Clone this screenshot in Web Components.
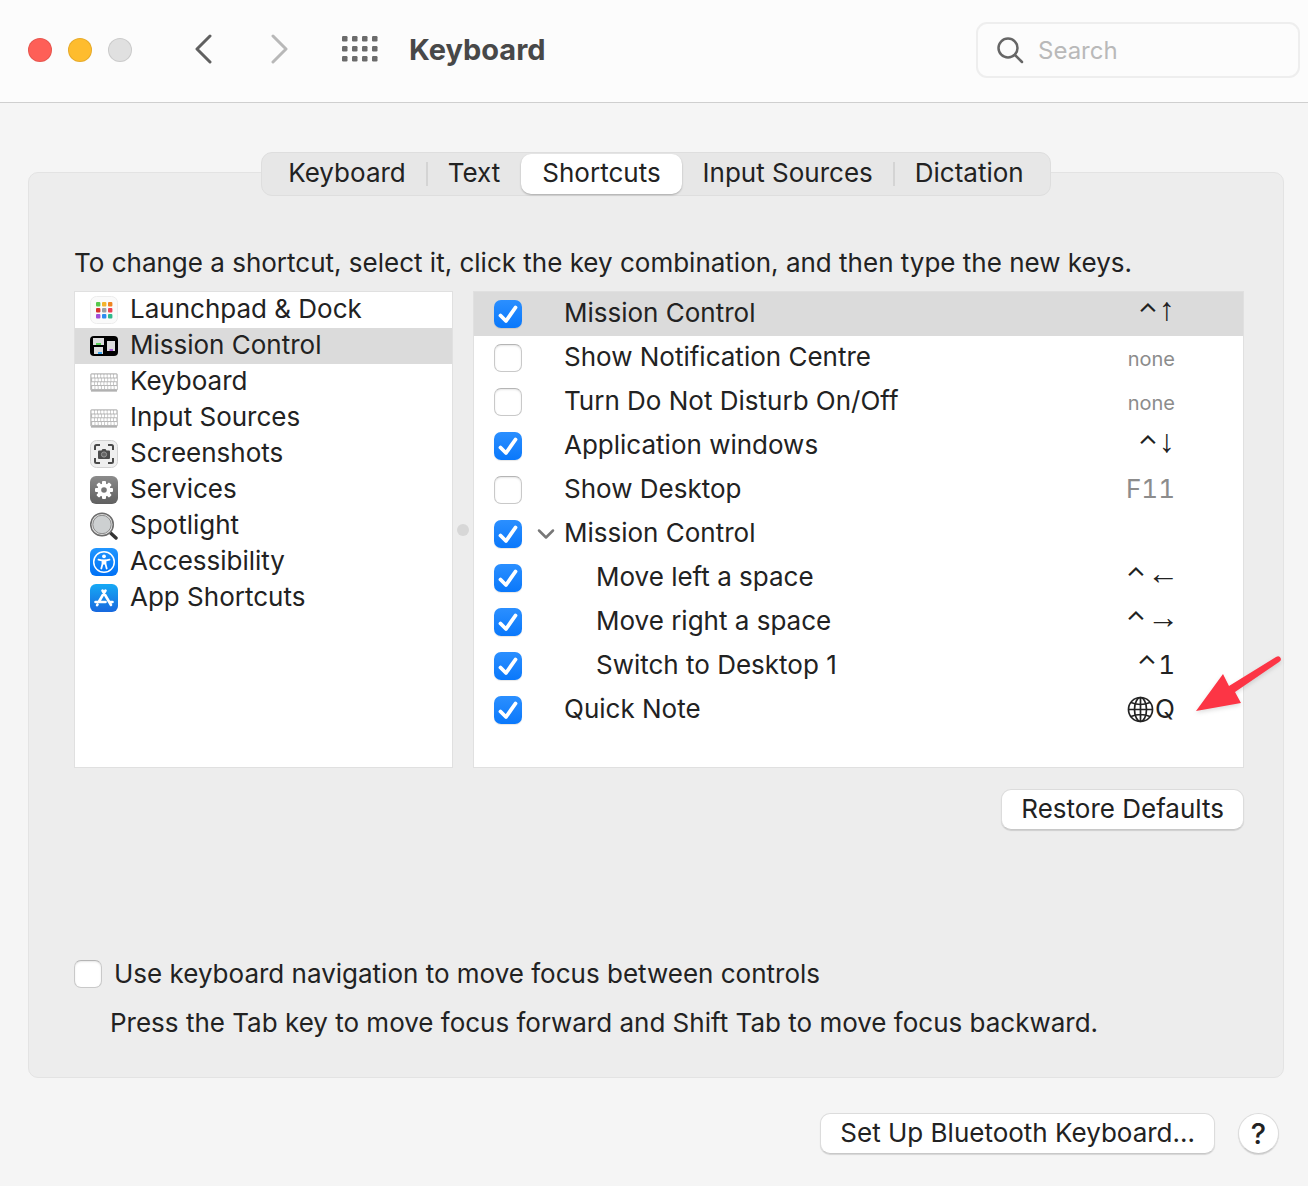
<!DOCTYPE html>
<html lang="en">
<head>
<meta charset="utf-8">
<title>Keyboard</title>
<style>
  html { height: 100%; }
  body { margin: 0; min-height: 100%; background: #f5f5f5; color: #222; font: 26px/36px Inter, "Liberation Sans", sans-serif; }
</style>
</head>
<body>
<pref-window>
  <title-bar slot="bar" heading="Keyboard"></title-bar>
  <tab-strip slot="tabs">
    <tab-item>Keyboard</tab-item>
    <tab-item divided>Text</tab-item>
    <tab-item selected>Shortcuts</tab-item>
    <tab-item>Input Sources</tab-item>
    <tab-item divided>Dictation</tab-item>
  </tab-strip>
  <span slot="intro">To change a shortcut, select it, click the key combination, and then type the new keys.</span>
  <category-list slot="categories">
    <category-item icon="launchpad">Launchpad &amp; Dock</category-item>
    <category-item icon="mission" selected>Mission Control</category-item>
    <category-item icon="keyboard">Keyboard</category-item>
    <category-item icon="keyboard">Input Sources</category-item>
    <category-item icon="screenshot">Screenshots</category-item>
    <category-item icon="gear">Services</category-item>
    <category-item icon="spotlight">Spotlight</category-item>
    <category-item icon="access">Accessibility</category-item>
    <category-item icon="apps">App Shortcuts</category-item>
  </category-list>
  <shortcut-list slot="shortcuts">
    <shortcut-row checked selected control keys="↑">Mission Control</shortcut-row>
    <shortcut-row keys="none" tone="small">Show Notification Centre</shortcut-row>
    <shortcut-row keys="none" tone="small">Turn Do Not Disturb On/Off</shortcut-row>
    <shortcut-row checked control keys="↓">Application windows</shortcut-row>
    <shortcut-row keys="F11" tone="dim">Show Desktop</shortcut-row>
    <shortcut-row checked group>Mission Control</shortcut-row>
    <shortcut-row checked nested control keys="←">Move left a space</shortcut-row>
    <shortcut-row checked nested control keys="→">Move right a space</shortcut-row>
    <shortcut-row checked nested control keys="1">Switch to Desktop 1</shortcut-row>
    <shortcut-row checked globe pointer keys="Q">Quick Note</shortcut-row>
  </shortcut-list>
  <push-button slot="restore">Restore Defaults</push-button>
  <check-option slot="option">Use keyboard navigation to move focus between controls</check-option>
  <span slot="hint">Press the Tab key to move focus forward and Shift Tab to move focus backward.</span>
  <push-button slot="footer">Set Up Bluetooth Keyboard…</push-button>
  <push-button slot="footer" round>?</push-button>
</pref-window>

<script>
const define = (name, render) => customElements.define(name, class extends HTMLElement {
  constructor() {
    super();
    this.attachShadow({ mode: 'open' });
  }
  connectedCallback() {
    this.shadowRoot.innerHTML = render(this);
  }
});

const checkStyle = `
  input { appearance: none; box-sizing: border-box; flex: none; width: 28px; height: 28px; margin: 0; border: 1px solid #c9c9c9; border-top-color: #b5b5b5; border-radius: 7px; background: #fff; box-shadow: inset 0 1px 2px #0000001a; }
  input:checked { border: 0; box-shadow: 0 1px 1px #0000001a; background: url("data:image/svg+xml,%3Csvg xmlns='http://www.w3.org/2000/svg' viewBox='0 0 28 28'%3E%3Cpath d='M6.500 15.500L12 21L21.500 7.500' fill='none' stroke='white' stroke-width='3.800' stroke-linecap='round' stroke-linejoin='round'/%3E%3C/svg%3E"), linear-gradient(#2b8fff, #0a78fb); }`;

const keyRows = [0, 1, 2, 3].map(r => Array.from({ length: 8 }, (_, c) =>
  `<rect x="${1.5 + c * 3.2 + (r % 2) * .6}" y="${6.6 + r * 3.8}" width="2.500" height="2.900" rx=".4"/>`).join('')).join('');
const padColors = ['#56c84b', '#f3b32a', '#ef8420', '#d9322d', '#9b9ea3', '#ef3f55', '#a04bd8', '#2d8cf0', '#2fb98c'];
const teeth = Array.from({ length: 8 }, (_, i) => `<rect x="12" y="5" width="4" height="6" rx="1" transform="rotate(${i * 45} 14 14)"/>`).join('');

const icons = {
  launchpad: `<rect x=".5" y=".5" width="27" height="27" rx="6" fill="#fafafa" stroke="#ececec"/>` +
    padColors.map((c, i) => `<rect x="${6 + (i % 3) * 6}" y="${6 + Math.floor(i / 3) * 6}" width="4.400" height="4.400" rx="1" fill="${c}"/>`).join(''),
  mission: `<rect y="4" width="28" height="20" rx="4"/><g fill="#dcdcdc"><rect x="3" y="6" width="11" height="7"/><rect x="4" y="15" width="9" height="7"/><rect x="17" y="9" width="8" height="10"/></g><path d="M6 12h5" stroke="#5ccf58" stroke-width="2"/><path d="M8 21h4" stroke="#38a5ee" stroke-width="2"/><path d="M19.500 18h3.500" stroke="#a65bd6" stroke-width="2"/>`,
  keyboard: `<rect x=".5" y="5.500" width="27" height="17" rx="1.500" fill="#b9b9b9" stroke="#c9c9c9"/><g fill="#fff">${keyRows}</g><path d="M1 23h26" stroke="#999"/>`,
  screenshot: `<rect x=".5" y=".5" width="27" height="27" rx="6" fill="#efefef" stroke="#d2d2d2"/><path d="M5 10V6.500Q5 5 6.500 5H10M18 5h3.500Q23 5 23 6.500V10M23 18v3.500Q23 23 21.500 23H18M10 23H6.500Q5 23 5 21.500V18" fill="none" stroke="#4a4a4a" stroke-width="2"/><path d="M9 10.500h2.500l1-1.500h3l1 1.500H19q1 0 1 1V18q0 1-1 1H9q-1 0-1-1v-6.500q0-1 1-1z" fill="#4c4c4c"/><circle cx="14" cy="14.500" r="2.600" fill="#666" stroke="#999"/>`,
  gear: `<defs><linearGradient id="g" x2="0" y2="1"><stop stop-color="#8b8b8b"/><stop offset="1" stop-color="#606060"/></linearGradient></defs><rect width="28" height="28" rx="6" fill="url(#g)"/><g fill="#fff">${teeth}<circle cx="14" cy="14" r="6.600"/></g><circle cx="14" cy="14" r="2.800" fill="#777"/>`,
  spotlight: `<path d="M19.500 20L26 26" stroke="#333" stroke-width="3.400" stroke-linecap="round"/><circle cx="12" cy="12.500" r="10.500" fill="#cdd0d1" stroke="#e4e4e4" stroke-width="2.400"/><circle cx="12" cy="12.500" r="11.300" fill="none" stroke="#6c6c6c" stroke-width="1.500"/><circle cx="12" cy="12.500" r="9.200" fill="none" stroke="#8b8b8b"/>`,
  access: `<defs><linearGradient id="g" x2="0" y2="1"><stop stop-color="#2196ff"/><stop offset="1" stop-color="#0071f5"/></linearGradient></defs><rect width="28" height="28" rx="6" fill="url(#g)"/><circle cx="14" cy="14" r="10.300" fill="none" stroke="#fff" stroke-width="1.500"/><circle cx="14" cy="8.300" r="1.900" fill="#fff"/><path d="M8.500 11.700l4 .8v3.500L11.300 20.500M19.500 11.700l-4 .8v3.500l1.200 4.500" fill="none" stroke="#fff" stroke-width="1.800" stroke-linecap="round"/><path d="M12.300 11.500h3.400v5h-3.400z" fill="#fff"/>`,
  apps: `<defs><linearGradient id="g" x2="0" y2="1"><stop stop-color="#16a9f5"/><stop offset="1" stop-color="#1768de"/></linearGradient></defs><rect width="28" height="28" rx="6" fill="url(#g)"/><g fill="none" stroke="#fff" stroke-width="2.600" stroke-linecap="round"><path d="M15.500 6.500L9 17.500M12.500 6.500l8.500 14.500M5.500 18h10M20 18h2.500M7.500 20.500l-.4.600"/></g>`
};

define('pref-window', () => `
  <style>
    :host { display: flex; flex-direction: column; min-height: 100vh; }
    main { display: flex; flex-direction: column; padding: 49px 24px 0 28px; }
    ::slotted([slot=tabs]) { align-self: center; z-index: 1; }
    .panel { margin-top: -24px; padding: 72px 39px 36px 45px; border: 1px solid #e3e3e3; border-radius: 10px; background: #ededed; }
    p { margin: 0; }
    .lists { display: grid; grid-template-columns: 379fr 20px 771fr; align-items: stretch; margin-top: 10px; }
    .split { align-self: center; justify-self: center; width: 12px; height: 12px; border-radius: 50%; background: #d7d7d7; }
    .restore { display: flex; justify-content: flex-end; margin-top: 21px; }
    .option { margin-top: 126px; }
    .hint { margin: 13px 0 0 36px; }
    footer { display: flex; justify-content: flex-end; gap: 23px; padding: 35px 29px 31px; }
  </style>
  <slot name="bar"></slot>
  <main>
    <slot name="tabs"></slot>
    <section class="panel">
      <p><slot name="intro"></slot></p>
      <div class="lists"><slot name="categories"></slot><i class="split"></i><slot name="shortcuts"></slot></div>
      <div class="restore"><slot name="restore"></slot></div>
      <div class="option"><slot name="option"></slot></div>
      <p class="hint"><slot name="hint"></slot></p>
    </section>
  </main>
  <footer><slot name="footer"></slot></footer>`);

define('title-bar', el => `
  <style>
    :host { display: flex; align-items: center; box-sizing: border-box; height: 103px; padding: 0 8px 3px 28px; border-bottom: 1px solid #cfcfcf; background: #fcfcfc; }
    .lights { display: flex; gap: 16px; }
    .lights button { width: 24px; height: 24px; border-radius: 50%; box-shadow: inset 0 0 0 1px #00000018; }
    button { display: block; padding: 0; border: 0; background: none; }
    svg { display: block; }
    .nav { display: flex; gap: 56px; margin-left: 61px; padding-bottom: 2px; }
    .all { margin-left: 53px; }
    h1 { flex: 1; margin: 0 0 0 30px; color: #484848; font-size: 29px; line-height: 36px; font-weight: 700; }
    label { display: flex; align-items: center; gap: 14px; box-sizing: border-box; width: 324px; height: 56px; padding: 0 19px; border: 2px solid #eee; border-radius: 11px; }
    input { flex: 1; min-width: 0; padding: 2px 0 0; border: 0; outline: 0; background: none; font: inherit; font-size: 24px; }
    input::placeholder { color: #b9b9b9; opacity: 1; }
  </style>
  <div class="lights">
    <button aria-label="Close" style="background:#fe5f57"></button>
    <button aria-label="Minimise" style="background:#febc2e"></button>
    <button aria-label="Zoom" style="background:#e0e0e0"></button>
  </div>
  <div class="nav">
    <button aria-label="Back"><svg width="20" height="30" fill="none" stroke="#606060" stroke-width="3" stroke-linecap="round" stroke-linejoin="round"><path d="M17 2L4 15L17 28"/></svg></button>
    <button aria-label="Forward"><svg width="20" height="30" fill="none" stroke="#b8b8b8" stroke-width="3" stroke-linecap="round" stroke-linejoin="round"><path d="M4 2L17 15L4 28"/></svg></button>
  </div>
  <button class="all" aria-label="Show all"><svg width="37" height="27" fill="#6b6b6b">${[0, 1, 2].map(r => [0, 1, 2, 3].map(c => `<rect x="${c * 10}" y="${r * 10}" width="5.500" height="5.500" rx="1.200"/>`).join('')).join('')}</svg></button>
  <h1>${el.getAttribute('heading')}</h1>
  <label><svg width="27" height="28" fill="none" stroke="#666" stroke-width="2.500" stroke-linecap="round"><circle cx="11" cy="12" r="9.500"/><path d="M18 19L25 26"/></svg><input type="search" placeholder="Search" aria-label="Search"></label>`);

define('tab-strip', () => `
  <style>
    :host { display: flex; box-sizing: border-box; height: 44px; padding: 1px 5px; border: 1px solid #dedede; border-radius: 11px; background: #e7e7e7; }
  </style><slot></slot>`);

define('tab-item', el => `
  <style>
    :host { display: flex; align-items: center; }
    :host([divided])::before { content: ""; width: 2px; height: 24px; margin: 0 -1px; background: #d4d4d4; }
    button { height: 40px; padding: 0 21px 2px; border: 0; border-radius: 10px; background: none; color: inherit; font: inherit; }
    :host([selected]) button { background: #fff; box-shadow: 0 1px 2px #0004; }
  </style>
  <button role="tab" aria-selected="${el.hasAttribute('selected')}"><slot></slot></button>`);

define('category-list', () => `
  <style>:host { display: block; border: 1px solid #e0e0e0; background: #fff; }</style><slot></slot>`);

define('category-item', el => `
  <style>
    :host { display: flex; align-items: center; gap: 12px; height: 36px; padding: 0 15px; }
    :host([selected]) { background: #dbdbdb; }
    svg { flex: none; }
    span { line-height: 34px; padding-bottom: 2px; }
  </style>
  <svg width="28" height="28" viewBox="0 0 28 28">${icons[el.getAttribute('icon')]}</svg><span><slot></slot></span>`);

define('shortcut-list', () => `
  <style>:host { display: block; padding-bottom: 35px; border: 1px solid #e0e0e0; background: #fff; }</style><slot></slot>`);

define('shortcut-row', el => {
  const keys = el.getAttribute('keys') || '';
  const arrow = keys && '↑↓←→'.includes(keys);
  const wide = keys && '←→'.includes(keys);
  return `
  <style>
    :host { display: block; position: relative; }
    :host([selected]) { background: #dbdbdb; }
    label { display: grid; grid-template-columns: 28px 42px 1fr auto; align-items: center; height: 44px; padding: 0 68px 0 20px; }
    ${checkStyle}
    .fold { justify-self: end; margin-right: 9px; }
    .fold svg { display: block; }
    .name, .keys { line-height: 34px; padding-bottom: 2px; }
    :host([nested]) .name { padding-left: 32px; }
    .keys { display: flex; align-items: center; gap: 1px; font-variant-numeric: tabular-nums; }
    .arrow { padding-bottom: 8px; font-family: "Liberation Sans", sans-serif; font-size: 32px; line-height: 26px; font-weight: 700; }
    .wide { margin: 0 -4px 0 0; }
    :host([tone]) .keys { color: #8c8c8c; }
    :host([tone=small]) .keys { font-size: 20px; padding: 2px 0 0; }
    .pointer { position: absolute; top: -33px; right: -41px; filter: drop-shadow(0 2px 2px #0002); }
  </style>
  <label>
    <input type="checkbox" ${el.hasAttribute('checked') ? 'checked' : ''}>
    <i class="fold">${el.hasAttribute('group') ? '<svg width="18" height="12" fill="none" stroke="#777" stroke-width="2.500" stroke-linecap="round" stroke-linejoin="round"><path d="M2 2.500L9 9.500L16 2.500"/></svg>' : ''}</i>
    <span class="name"><slot></slot></span>
    <span class="keys">${el.hasAttribute('globe') ? '<svg width="27" height="27" fill="none" stroke="#222" stroke-width="1.700"><circle cx="13.500" cy="13.500" r="12"/><ellipse cx="13.500" cy="13.500" rx="6" ry="12"/><path d="M13.500 1.500v24M1.500 13.500h24M4 6.500q9.500 4 19 0M4 20.500q9.500-4 19 0"/></svg>' : ''}${el.hasAttribute('control') ? '<span>⌃</span>' : ''}<span class="${arrow ? 'arrow' : ''} ${wide ? 'wide' : ''}">${keys}</span></span>
  </label>
  ${el.hasAttribute('pointer') ? '<svg class="pointer" width="92" height="66"><path d="M4 56L31 19L37 31L84 2Q88 0 89 4Q89 6 87 7L43 37L49 48Z" fill="#fc3545"/></svg>' : ''}`;
});

define('push-button', () => `
  <style>
    :host { display: block; }
    button { display: block; height: 41px; padding: 0 19px 2px; border: 1px solid #dcdcdc; border-bottom-color: #c8c8c8; border-radius: 10px; background: #fff; box-shadow: 0 1px 1px #0002; color: inherit; font: inherit; }
    :host([round]) button { width: 41px; padding: 0; border-radius: 50%; font-size: 29px; font-weight: 500; }
  </style>
  <button><slot></slot></button>`);

define('check-option', () => `
  <style>
    :host { display: block; }
    label { display: flex; align-items: center; gap: 12px; }
    ${checkStyle}
  </style>
  <label><input type="checkbox"><span><slot></slot></span></label>`);
</script>
</body>
</html>
